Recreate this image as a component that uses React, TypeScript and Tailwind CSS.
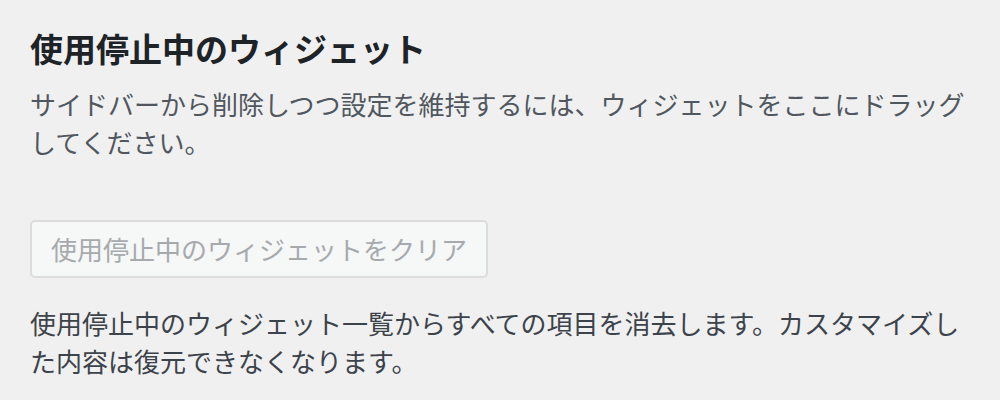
export default function App() {
  return (
    <div className="min-h-[400px] w-full bg-[#f0f0f1] px-[30px] pt-[28px] font-['Noto_Sans_CJK_JP','Noto_Sans',sans-serif]">
      <h3 className="text-[33px] font-bold leading-[40px] text-[#1d2327]">使用停止中のウィジェット</h3>
      <p className="mt-[17px] text-[26px] leading-[38px] text-[#50575e]">
        サイドバーから削除しつつ設定を維持するには、ウィジェットをここにドラッグしてください。
      </p>
      <button
        type="button"
        disabled
        className="mt-[59px] h-[58px] rounded-[5px] border-2 border-[#dcdcde] bg-[#f6f7f7] px-[19px] text-[26px] leading-[54px] text-[#a7aaad]"
      >
        使用停止中のウィジェットをクリア
      </button>
      <p className="mt-[26px] text-[26px] leading-[38px] text-[#3c434a]">
        使用停止中のウィジェット一覧からすべての項目を消去します。カスタマイズした内容は復元できなくなります。
      </p>
    </div>
  );
}
